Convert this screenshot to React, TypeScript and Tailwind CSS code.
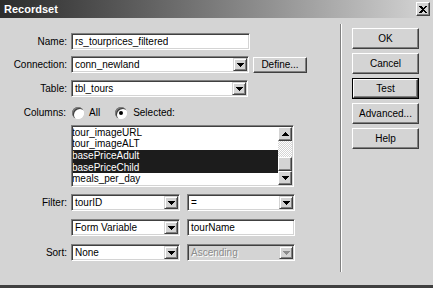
import React from "react";

const sunken =
  "border border-[#808080] border-r-white border-b-white shadow-[inset_1px_1px_0_#404040,inset_-1px_-1px_0_#d4d4d4]";
const raised =
  "border border-white border-r-[#404040] border-b-[#404040] shadow-[inset_-1px_-1px_0_#808080] bg-[#d4d4d4]";

function Arrow({ up, color = "#000" }: { up?: boolean; color?: string }) {
  return (
    <svg width="7" height="4" viewBox="0 0 7 4" shapeRendering="crispEdges">
      <path d={up ? "M3.5 0L7 4H0z" : "M0 0h7L3.5 4z"} fill={color} />
    </svg>
  );
}

function DropButton({ disabled }: { disabled?: boolean }) {
  return (
    <div className="mr-[1px] flex h-[13px] w-[14px] shrink-0 items-center justify-center border border-[#d4d4d4] border-r-[#404040] border-b-[#404040] bg-[#d4d4d4] shadow-[inset_1px_1px_0_#fff,inset_-1px_-1px_0_#808080]">
      <Arrow color={disabled ? "#8c8c8c" : "#000"} />
    </div>
  );
}

function Combo({
  width,
  text,
  disabled,
}: {
  width: string;
  text: string;
  disabled?: boolean;
}) {
  return (
    <div
      className={`flex h-[17px] items-center ${width} ${sunken} ${
        disabled ? "bg-[#d4d4d4]" : "bg-white"
      }`}
    >
      <span
        className={`flex-1 truncate pl-[3px] ${
          disabled ? "text-[#8c8c8c] [text-shadow:1px_1px_0_#fff]" : "text-black"
        }`}
      >
        {text}
      </span>
      <DropButton disabled={disabled} />
    </div>
  );
}

function TextBox({ width, text }: { width: string; text: string }) {
  return (
    <div className={`flex h-[17px] items-center bg-white ${width} ${sunken}`}>
      <span className="truncate pl-[3px]">{text}</span>
    </div>
  );
}

function Radio({ checked }: { checked?: boolean }) {
  return (
    <span className="flex h-[12px] w-[12px] items-center justify-center rounded-full bg-white shadow-[inset_1px_1px_0_#808080,inset_2px_2px_0_#404040,inset_-1px_-1px_0_#fff]">
      {checked && <span className="h-[4px] w-[4px] rounded-full bg-black" />}
    </span>
  );
}

function Label({ children }: { children: React.ReactNode }) {
  return <span className="w-[68px] shrink-0 pr-[1px] text-right">{children}</span>;
}

function DialogButton({ label, isDefault }: { label: string; isDefault?: boolean }) {
  if (isDefault) {
    return (
      <div className="h-[21px] w-[67px] border border-black">
        <div className={`flex h-full w-full items-center justify-center ${raised}`}>
          {label}
        </div>
      </div>
    );
  }
  return (
    <div className={`flex h-[21px] w-[67px] items-center justify-center ${raised}`}>
      {label}
    </div>
  );
}

const columns = [
  { name: "tour_imageURL", selected: false },
  { name: "tour_imageALT", selected: false },
  { name: "basePriceAdult", selected: true },
  { name: "basePriceChild", selected: true },
  { name: "meals_per_day", selected: false },
];

export default function App() {
  return (
    <div className="flex h-[288px] w-[433px] flex-col overflow-hidden border-b-[3px] border-b-[#404040] bg-[#d4d4d4] font-['Liberation_Sans',Arial,sans-serif] text-[10px] leading-none text-black">
      <div className="flex h-[18px] shrink-0 items-center justify-between bg-linear-to-r from-[#2c2c2c] via-[#7c7c7c] to-[#d6d6d6] pr-[3px] pl-[4px]">
        <span className="text-[11px] font-bold text-white">Recordset</span>
        <div className={`flex h-[14px] w-[14px] items-center justify-center ${raised}`}>
          <svg width="8" height="7" viewBox="0 0 8 7" shapeRendering="crispEdges">
            <path d="M0 0h2l2 2 2-2h2L5 3.5 8 7H6L4 5 2 7H0l3-3.5z" fill="#000" />
          </svg>
        </div>
      </div>

      <div className="flex flex-1">
        <div className="flex w-[340px] flex-col pt-[15px]">
          <div className="flex h-[17px] items-center gap-[3px]">
            <Label>Name:</Label>
            <TextBox width="w-[179px]" text="rs_tourprices_filtered" />
          </div>

          <div className="mt-[6px] flex h-[17px] items-center gap-[3px]">
            <Label>Connection:</Label>
            <Combo width="w-[178px]" text="conn_newland" />
            <div className={`ml-[1px] flex h-[16px] w-[54px] items-center justify-center ${raised}`}>
              Define...
            </div>
          </div>

          <div className="mt-[7px] flex h-[17px] items-center gap-[3px]">
            <Label>Table:</Label>
            <Combo width="w-[177px]" text="tbl_tours" />
          </div>

          <div className="mt-[9px] flex h-[13px] items-center">
            <span className="w-[66px] shrink-0 text-right">Columns:</span>
            <span className="ml-[6px]">
              <Radio />
            </span>
            <span className="ml-[5px]">All</span>
            <span className="ml-[15px]">
              <Radio checked />
            </span>
            <span className="ml-[6px]">Selected:</span>
          </div>

          <div className={`mt-[6px] ml-[71px] flex h-[62px] w-[223px] bg-white p-[1px] ${sunken}`}>
            <div className="flex-1 overflow-hidden">
              {columns.map((c) => (
                <div
                  key={c.name}
                  className={`flex h-[11.6px] items-center overflow-hidden ${
                    c.selected ? "bg-[#1c1c1c] text-white" : "text-black"
                  }`}
                >
                  <span className="-ml-[1px] whitespace-nowrap">{c.name}</span>
                </div>
              ))}
            </div>
            <div className="flex w-[14px] flex-col">
              <div className={`flex h-[14px] items-center justify-center ${raised}`}>
                <Arrow up />
              </div>
              <div className="h-[16px] bg-[repeating-conic-gradient(#fff_0_25%,#d4d4d4_0_50%)] bg-[length:2px_2px]" />
              <div className={`h-[14px] ${raised}`} />
              <div className={`flex h-[14px] items-center justify-center ${raised}`}>
                <Arrow />
              </div>
            </div>
          </div>

          <div className="mt-[7px] flex h-[17px] items-center gap-[3px]">
            <Label>Filter:</Label>
            <Combo width="w-[109px]" text="tourID" />
            <div className="ml-[4px]">
              <Combo width="w-[108px]" text="=" />
            </div>
          </div>

          <div className="mt-[8px] flex h-[17px] items-center gap-[3px]">
            <Label />
            <Combo width="w-[109px]" text="Form Variable" />
            <div className="ml-[4px]">
              <TextBox width="w-[108px]" text="tourName" />
            </div>
          </div>

          <div className="mt-[8px] flex h-[17px] items-center gap-[3px]">
            <Label>Sort:</Label>
            <Combo width="w-[109px]" text="None" />
            <div className="ml-[4px]">
              <Combo width="w-[108px]" text="Ascending" disabled />
            </div>
          </div>
        </div>

        <div className="mt-[6px] h-[248px] w-[2px] border-l border-l-[#808080] border-r border-r-white" />

        <div className="flex flex-col gap-[4px] pt-[10px] pl-[10px]">
          <DialogButton label="OK" />
          <DialogButton label="Cancel" />
          <DialogButton label="Test" isDefault />
          <DialogButton label="Advanced..." />
          <DialogButton label="Help" />
        </div>
      </div>
    </div>
  );
}
